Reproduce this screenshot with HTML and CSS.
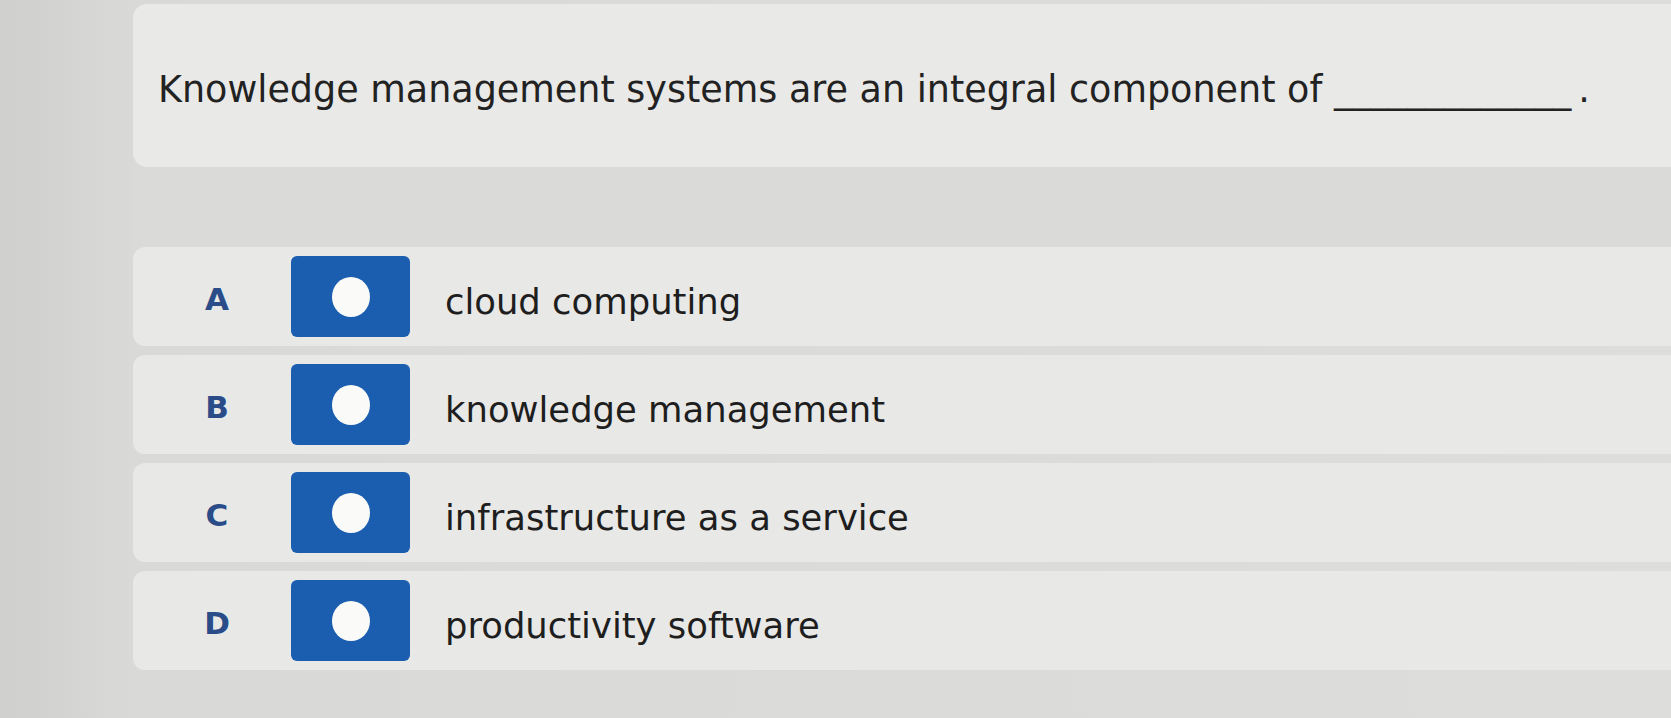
FILE: index.html
```html
<!DOCTYPE html>
<html lang="en">
<head>
<meta charset="utf-8">
<title>Question</title>
<link rel="stylesheet" href="styles.css">
</head>
<body>
<main class="page">
  <section class="question-card">
    <p class="question">Knowledge management systems are an integral component of <span class="blank">_____________</span>.</p>
  </section>
  <div class="band"></div>
  <ul class="options">
    <li class="option">
      <span class="letter">A</span>
      <span class="radio"><span class="dot"></span></span>
      <span class="answer">cloud computing</span>
    </li>
    <li class="option">
      <span class="letter">B</span>
      <span class="radio"><span class="dot"></span></span>
      <span class="answer">knowledge management</span>
    </li>
    <li class="option">
      <span class="letter">C</span>
      <span class="radio"><span class="dot"></span></span>
      <span class="answer">infrastructure as a service</span>
    </li>
    <li class="option">
      <span class="letter">D</span>
      <span class="radio"><span class="dot"></span></span>
      <span class="answer">productivity software</span>
    </li>
  </ul>
</main>
</body>
</html>
```
FILE: styles.css
```css
html, body {
  margin: 0;
  padding: 0;
}
body {
  width: 1671px;
  height: 718px;
  overflow: hidden;
  background: linear-gradient(90deg, #cfcfcd 0px, #d9d9d7 133px, #dddddb 100%);
  font-family: "DejaVu Sans", Verdana, sans-serif;
  color: #222;
}
.page {
  padding-left: 133px;
  padding-top: 4px;
}
.question-card {
  height: 163px;
  background: #e9e9e7;
  border-radius: 14px 0 0 14px;
  padding-left: 25px;
  box-sizing: border-box;
}
.question {
  margin: 0;
  padding-top: 64px;
  font-size: 36.5px;
  line-height: 44px;
  color: #222;
}
.blank {
  margin-right: 7px;
}
.band {
  height: 80px;
  background: #dadad8;
}
.options {
  list-style: none;
  margin: 0;
  padding: 0;
  display: flex;
  flex-direction: column;
  gap: 9px;
}
.option {
  height: 99px;
  background: #e8e8e6;
  border-radius: 12px 0 0 12px;
  display: flex;
  align-items: center;
  padding-left: 59px;
}
.letter {
  width: 50px;
  text-align: center;
  font-weight: bold;
  font-size: 31px;
  color: #2a4c88;
  padding-top: 4px;
}
.radio {
  width: 119px;
  height: 81px;
  margin-left: 49px;
  background: #1b5eb0;
  border-radius: 6px;
  display: flex;
  align-items: center;
  justify-content: center;
  flex-shrink: 0;
}
.dot {
  width: 38px;
  height: 40px;
  border-radius: 50%;
  background: #fafaf8;
}
.answer {
  margin-left: 35px;
  font-size: 35.4px;
  color: #1e1e1e;
  padding-top: 10px;
}
```
